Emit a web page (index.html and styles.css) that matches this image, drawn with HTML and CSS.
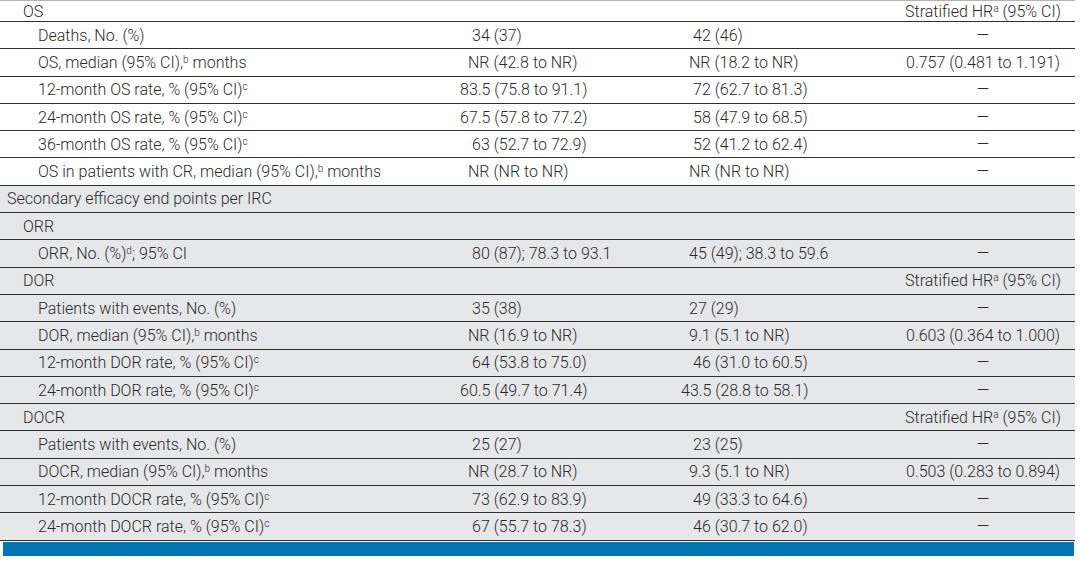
FILE: index.html
```html
<!DOCTYPE html>
<html lang="en">
<head>
<meta charset="utf-8">
<title>Efficacy end points</title>
<link rel="stylesheet" href="styles.css">
</head>
<body>
<div class="tbl">
  <div class="row first">
    <div class="lab l1">OS</div>
    <div class="c4">Stratified HR<sup>a</sup> (95% CI)</div>
  </div>
  <div class="row">
    <div class="lab l2">Deaths, No. (%)</div>
    <div class="c2">34 (37)</div>
    <div class="c3">42 (46)</div>
    <div class="c4">—</div>
  </div>
  <div class="row">
    <div class="lab l2">OS, median (95% CI),<sup>b</sup> months</div>
    <div class="c2 nr">NR (42.8 to NR)</div>
    <div class="c3 nr">NR (18.2 to NR)</div>
    <div class="c4">0.757 (0.481 to 1.191)</div>
  </div>
  <div class="row">
    <div class="lab l2">12-month OS rate, % (95% CI)<sup>c</sup></div>
    <div class="c2 dec">83.5 (75.8 to 91.1)</div>
    <div class="c3">72 (62.7 to 81.3)</div>
    <div class="c4">—</div>
  </div>
  <div class="row">
    <div class="lab l2">24-month OS rate, % (95% CI)<sup>c</sup></div>
    <div class="c2 dec">67.5 (57.8 to 77.2)</div>
    <div class="c3">58 (47.9 to 68.5)</div>
    <div class="c4">—</div>
  </div>
  <div class="row">
    <div class="lab l2">36-month OS rate, % (95% CI)<sup>c</sup></div>
    <div class="c2">63 (52.7 to 72.9)</div>
    <div class="c3">52 (41.2 to 62.4)</div>
    <div class="c4">—</div>
  </div>
  <div class="row">
    <div class="lab l2">OS in patients with CR, median (95% CI),<sup>b</sup> months</div>
    <div class="c2 nr">NR (NR to NR)</div>
    <div class="c3 nr">NR (NR to NR)</div>
    <div class="c4">—</div>
  </div>

  <div class="row gray">
    <div class="lab l0">Secondary efficacy end points per IRC</div>
  </div>
  <div class="row gray">
    <div class="lab l1">ORR</div>
  </div>
  <div class="row gray">
    <div class="lab l2">ORR, No. (%)<sup>d</sup>; 95% CI</div>
    <div class="c2">80 (87); 78.3 to 93.1</div>
    <div class="c3 nr">45 (49); 38.3 to 59.6</div>
    <div class="c4">—</div>
  </div>
  <div class="row gray">
    <div class="lab l1">DOR</div>
    <div class="c4">Stratified HR<sup>a</sup> (95% CI)</div>
  </div>
  <div class="row gray">
    <div class="lab l2">Patients with events, No. (%)</div>
    <div class="c2">35 (38)</div>
    <div class="c3 nr">27 (29)</div>
    <div class="c4">—</div>
  </div>
  <div class="row gray">
    <div class="lab l2">DOR, median (95% CI),<sup>b</sup> months</div>
    <div class="c2 nr">NR (16.9 to NR)</div>
    <div class="c3 nr">9.1 (5.1 to NR)</div>
    <div class="c4">0.603 (0.364 to 1.000)</div>
  </div>
  <div class="row gray">
    <div class="lab l2">12-month DOR rate, % (95% CI)<sup>c</sup></div>
    <div class="c2">64 (53.8 to 75.0)</div>
    <div class="c3">46 (31.0 to 60.5)</div>
    <div class="c4">—</div>
  </div>
  <div class="row gray">
    <div class="lab l2">24-month DOR rate, % (95% CI)<sup>c</sup></div>
    <div class="c2 dec">60.5 (49.7 to 71.4)</div>
    <div class="c3 dec">43.5 (28.8 to 58.1)</div>
    <div class="c4">—</div>
  </div>
  <div class="row gray">
    <div class="lab l1">DOCR</div>
    <div class="c4">Stratified HR<sup>a</sup> (95% CI)</div>
  </div>
  <div class="row gray">
    <div class="lab l2">Patients with events, No. (%)</div>
    <div class="c2">25 (27)</div>
    <div class="c3">23 (25)</div>
    <div class="c4">—</div>
  </div>
  <div class="row gray">
    <div class="lab l2">DOCR, median (95% CI),<sup>b</sup> months</div>
    <div class="c2 nr">NR (28.7 to NR)</div>
    <div class="c3 nr">9.3 (5.1 to NR)</div>
    <div class="c4">0.503 (0.283 to 0.894)</div>
  </div>
  <div class="row gray">
    <div class="lab l2">12-month DOCR rate, % (95% CI)<sup>c</sup></div>
    <div class="c2">73 (62.9 to 83.9)</div>
    <div class="c3">49 (33.3 to 64.6)</div>
    <div class="c4">—</div>
  </div>
  <div class="row gray">
    <div class="lab l2">24-month DOCR rate, % (95% CI)<sup>c</sup></div>
    <div class="c2">67 (55.7 to 78.3)</div>
    <div class="c3">46 (30.7 to 62.0)</div>
    <div class="c4">—</div>
  </div>
</div>
<div class="footbar"></div>
</body>
</html>
```

FILE: styles.css
```css
html, body {
  margin: 0;
  padding: 0;
  background: #ffffff;
}

body {
  font-family: Roboto, "Noto Sans", "Liberation Sans", sans-serif;
  font-size: 16px;
  font-weight: 300;
  color: #2a2a2a;
}

.tbl {
  width: 1075px;
  border-top: 1px solid #b4b4b4;
}

.row {
  display: grid;
  grid-template-columns: 440px 222px 233px 176px;
  align-items: center;
  box-sizing: border-box;
  height: 27.3px;
  border-bottom: 1px solid #2e2e2e;
  white-space: nowrap;
}

.row.first {
  height: 21px;
}

.row.gray {
  background: #e6e7e8;
}

.lab {
  grid-column: 1;
}

.l0 { padding-left: 7px; }
.l1 { padding-left: 23px; }
.l2 { padding-left: 38px; }

.c2 {
  grid-column: 2;
  padding-left: 32px;
}

.c3 {
  grid-column: 3;
  padding-left: 31px;
}

.c4 {
  grid-column: 4;
  text-align: center;
}

.nr { margin-left: -4px; }
.dec { margin-left: -12px; }

sup {
  font-size: 10px;
  line-height: 0;
  vertical-align: 5px;
}

.footbar {
  margin: 1px 0 0 3px;
  width: 1071px;
  height: 14px;
  background: #0075b2;
}
```
